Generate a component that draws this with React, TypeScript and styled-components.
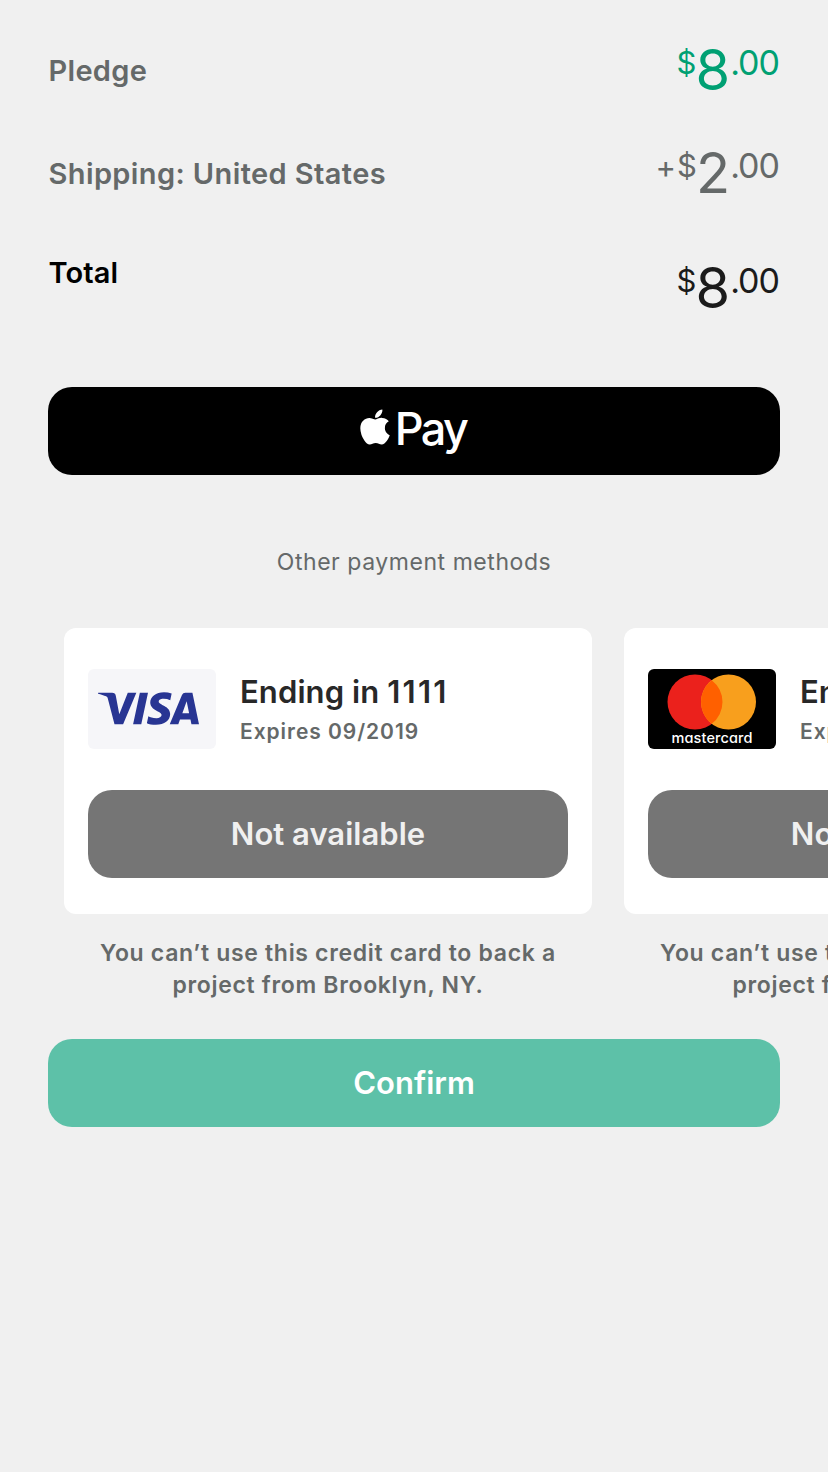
import React from 'react';
import styled, { createGlobalStyle } from 'styled-components';
import { FaApple } from 'react-icons/fa';
import { SiVisa } from 'react-icons/si';

const GlobalStyle = createGlobalStyle`
  *, *::before, *::after { box-sizing: border-box; }
  html { overflow: hidden; }
  body {
    margin: 0;
    background: #f0f0f0;
    font-family: Inter, 'Liberation Sans', sans-serif;
    overflow: hidden;
  }
  button { border: 0; padding: 0; font-family: inherit; }
`;

const Page = styled.main`
  width: 828px;
  height: 1472px;
  padding-top: 19px;
  display: flex;
  flex-direction: column;
  overflow: hidden;
  background: #f0f0f0;
`;

const Summary = styled.section`
  padding: 0 48px;
`;

const SummaryRow = styled.div<{ $height: number; $amountTop: number }>`
  height: ${(p) => p.$height}px;
  display: flex;
  justify-content: space-between;
  align-items: flex-start;
  & > :last-child { margin-top: ${(p) => p.$amountTop}px; }
`;

const Label = styled.span<{ $color: string; $spacing: number }>`
  padding-left: 0.5px;
  font-size: 29px;
  font-weight: 600;
  line-height: 103px;
  letter-spacing: ${(p) => p.$spacing}px;
  color: ${(p) => p.$color};
`;

const Amount = styled.span<{ $color: string }>`
  display: flex;
  align-items: flex-start;
  padding-right: 1px;
  color: ${(p) => p.$color};
`;

const Sign = styled.span`
  font-size: 31px;
  line-height: 45px;
  margin-right: 1px;
`;

const Currency = styled.span`
  font-size: 31px;
  line-height: 43px;
`;

const Whole = styled.span`
  font-size: 56px;
  line-height: 58px;
  margin: 0 0 0 -1px;
`;

const Cents = styled.span`
  font-size: 34px;
  line-height: 43px;
  letter-spacing: -1px;
`;

const WideButton = styled.button<{ $bg: string; $color: string }>`
  height: 88px;
  flex: none;
  margin: 0 48px;
  padding-bottom: 2px;
  border-radius: 24px;
  display: flex;
  justify-content: center;
  align-items: center;
  background: ${(p) => p.$bg};
  color: ${(p) => p.$color};
  font-size: 31px;
  font-weight: 600;
  letter-spacing: 0.02px;
`;

const AppleMark = styled(FaApple)`
  width: 30px;
  height: 40px;
  margin: -6px 5px 0 0;
`;

const PayText = styled.span`
  font-size: 45px;
  font-weight: 500;
  line-height: 60px;
  letter-spacing: -2.6px;
  margin: -3px 2px 0 0;
`;

const OtherMethods = styled.p`
  margin: 67px 0 46px;
  text-align: center;
  font-size: 23px;
  line-height: 40px;
  letter-spacing: 0.55px;
  color: #656969;
`;

const CardList = styled.section`
  display: flex;
  gap: 32px;
  padding-left: 64px;
  height: 411px;
  flex: none;
`;

const CardColumn = styled.div`
  width: 528px;
  flex: none;
`;

const Card = styled.article`
  height: 286px;
  padding: 41px 24px 36px;
  border-radius: 12px;
  background: #fff;
  display: flex;
  flex-direction: column;
  justify-content: space-between;
`;

const CardHeader = styled.div`
  display: flex;
  gap: 24px;
  height: 80px;
`;

const BrandTile = styled.div<{ $bg: string }>`
  width: 128px;
  height: 80px;
  border-radius: 6px;
  overflow: hidden;
  background: ${(p) => p.$bg};
  color: #283593;
  display: flex;
  justify-content: center;
  align-items: center;
  svg { display: block; }
`;

const VisaMark = styled(SiVisa)`
  margin: 0 7px 1px 0;
`;

const CardTitle = styled.div`
  font-size: 31px;
  font-weight: 600;
  line-height: 46px;
  letter-spacing: 0.1px;
  color: #282828;
`;

const CardDigits = styled.span`
  letter-spacing: 2.2px;
`;

const CardExpiry = styled.div`
  font-size: 21px;
  font-weight: 600;
  line-height: 33px;
  letter-spacing: 0.95px;
  color: #656969;
`;

const CardButton = styled(WideButton)`
  margin: 0;
`;

const CardNote = styled.p`
  margin: 23px 0 0;
  text-align: center;
  font-size: 23px;
  font-weight: 600;
  line-height: 32px;
  letter-spacing: 0.68px;
  color: #656969;
`;

const Price = ({ sign, whole, color }: { sign?: string; whole: string; color: string }) => (
  <Amount $color={color}>
    {sign && <Sign>{sign}</Sign>}
    <Currency>$</Currency>
    <Whole>{whole}</Whole>
    <Cents>.00</Cents>
  </Amount>
);

const MastercardLogo = () => (
  <svg width="128" height="80" viewBox="0 0 128 80" role="img" aria-label="Mastercard">
    <circle cx="47" cy="33" r="27.5" fill="#eb211c" />
    <circle cx="80.5" cy="33" r="27.5" fill="#f89f1d" />
    <path d="M63.75 11.2a27.5 27.5 0 0 1 0 43.6a27.5 27.5 0 0 1 0-43.6z" fill="#ff6000" />
    <text
      x="64"
      y="74.3"
      textAnchor="middle"
      fill="#fff"
      fontSize="14.5"
      fontWeight="500"
      textLength="81"
      style={{ fontFeatureSettings: '"cv11"' }}
    >
      mastercard
    </text>
  </svg>
);

const PaymentCard = ({ brand }: { brand: 'visa' | 'mastercard' }) => (
  <CardColumn>
    <Card>
      <CardHeader>
        <BrandTile $bg={brand === 'visa' ? '#f6f6f9' : '#000'}>
          {brand === 'visa' ? <VisaMark size={101} aria-label="Visa" /> : <MastercardLogo />}
        </BrandTile>
        <div>
          <CardTitle>Ending in <CardDigits>1111</CardDigits></CardTitle>
          <CardExpiry>Expires 09/2019</CardExpiry>
        </div>
      </CardHeader>
      <CardButton $bg="#757575" $color="#f0f0f0">Not available</CardButton>
    </Card>
    <CardNote>
      You can’t use this credit card to back a<br />project from Brooklyn, NY.
    </CardNote>
  </CardColumn>
);

export default function App() {
  return (
    <>
      <GlobalStyle />
      <Page>
        <Summary>
          <SummaryRow $height={103} $amountTop={22}>
            <Label $color="#656969" $spacing={0.3}>Pledge</Label>
            <Price whole="8" color="#00a073" />
          </SummaryRow>
          <SummaryRow $height={99} $amountTop={22}>
            <Label $color="#656969" $spacing={0.39}>Shipping: United States</Label>
            <Price sign="+" whole="2" color="#656969" />
          </SummaryRow>
          <SummaryRow $height={166} $amountTop={38}>
            <Label $color="#000" $spacing={0.1}>Total</Label>
            <Price whole="8" color="#1b1b1b" />
          </SummaryRow>
        </Summary>
        <WideButton $bg="#000" $color="#fff" aria-label="Apple Pay">
          <AppleMark />
          <PayText>Pay</PayText>
        </WideButton>
        <OtherMethods>Other payment methods</OtherMethods>
        <CardList>
          <PaymentCard brand="visa" />
          <PaymentCard brand="mastercard" />
        </CardList>
        <WideButton $bg="#5dc1a8" $color="#fff">Confirm</WideButton>
      </Page>
    </>
  );
}
